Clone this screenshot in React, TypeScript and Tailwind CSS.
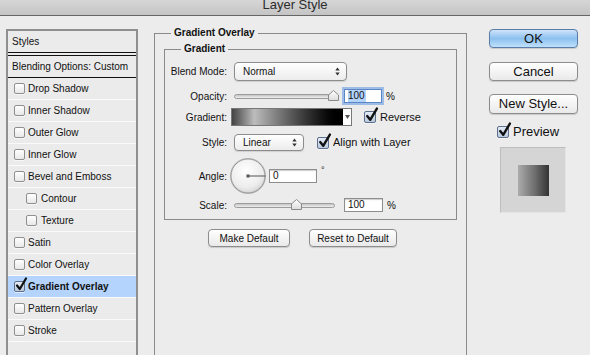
import React from 'react';

const styleRows = [
  { label: 'Drop Shadow' },
  { label: 'Inner Shadow' },
  { label: 'Outer Glow' },
  { label: 'Inner Glow' },
  { label: 'Bevel and Emboss' },
  { label: 'Contour', indent: true },
  { label: 'Texture', indent: true },
  { label: 'Satin' },
  { label: 'Color Overlay' },
  { label: 'Gradient Overlay', checked: true, active: true },
  { label: 'Pattern Overlay' },
  { label: 'Stroke' },
];

function Checkbox({ checked = false, big = false }: { checked?: boolean; big?: boolean }) {
  const box = big ? 'w-[12px] h-[12px]' : 'w-[11px] h-[11px]';
  return (
    <span className={`relative inline-block shrink-0 ${box}`}>
      <span
        className={`block w-full h-full rounded-[2px] border shadow-[0_1px_0_rgba(255,255,255,0.6)] ${
          checked
            ? 'border-[#5d6f8a] bg-linear-to-b from-[#e4ecf6] to-[#b9c9dd]'
            : 'border-[#8f8f8f] bg-linear-to-b from-white to-[#e8e8e8]'
        }`}
      />
      {checked && (
        <svg
          className="absolute left-[1px] -top-[3px] overflow-visible"
          width={big ? 13 : 12}
          height={big ? 14 : 13}
          viewBox="0 0 12 13"
        >
          <path d="M2 7.5 L4.8 11 L11 0.5" fill="none" stroke="#111" strokeWidth="2.2" strokeLinejoin="round" strokeLinecap="round" />
        </svg>
      )}
    </span>
  );
}

function UpDown() {
  return (
    <svg width="5" height="9" viewBox="0 0 5 9" className="shrink-0">
      <path d="M2.5 0.5 L4.7 3.5 L0.3 3.5 Z" fill="#333" />
      <path d="M2.5 8.5 L4.7 5.5 L0.3 5.5 Z" fill="#333" />
    </svg>
  );
}

function Select({ value, width }: { value: string; width: string }) {
  return (
    <div
      className={`${width} flex items-center justify-between pl-[8px] pr-[6px] rounded-[4px] border border-[#8c8c8c] bg-linear-to-b from-white to-[#ececec] shadow-[0_1px_1px_rgba(0,0,0,0.12)] text-[10px]`}
    >
      <span>{value}</span>
      <UpDown />
    </div>
  );
}

function Slider({ pos }: { pos: number }) {
  return (
    <div className="relative w-[101px] h-[12px] flex items-center">
      <div className="w-full h-[5px] rounded-full border border-[#9c9c9c] bg-linear-to-b from-[#c4c4c4] to-[#efefef]" />
      <svg
        className="absolute top-[0px]"
        style={{ left: pos - 5 }}
        width="11"
        height="11"
        viewBox="0 0 11 11"
      >
        <defs>
          <linearGradient id="thumb" x1="0" y1="0" x2="0" y2="1">
            <stop offset="0" stopColor="#ffffff" />
            <stop offset="1" stopColor="#dcdcdc" />
          </linearGradient>
        </defs>
        <path d="M5.5 0.5 L10.5 5 L10.5 10.5 L0.5 10.5 L0.5 5 Z" fill="url(#thumb)" stroke="#8a8a8a" />
      </svg>
    </div>
  );
}

function NumberBox({ value, w, focused = false }: { value: string; w: string; focused?: boolean }) {
  return (
    <div
      className={`${w} h-[14px] flex items-center pl-[3px] bg-white text-[10px] leading-[12px] border ${
        focused
          ? 'border-[#5a86c4] shadow-[0_0_0_2px_#9dbde8]'
          : 'border-[#8e8e8e] shadow-[inset_0_1px_1px_rgba(0,0,0,0.2)]'
      }`}
    >
      <span className={focused ? 'bg-[#b4d3fb] pr-[1px]' : ''}>{value}</span>
    </div>
  );
}

function Button({ label, w, h, primary = false, size = 'text-[13px]' }: { label: string; w: string; h: string; primary?: boolean; size?: string }) {
  return (
    <div
      className={`${w} ${h} ${size} flex items-center justify-center rounded-[4px] border shadow-[0_1px_1px_rgba(0,0,0,0.15)] ${
        primary
          ? 'border-[#5a7ca8] bg-linear-to-b from-[#cfe4fa] via-[#8cc0ef] to-[#bfe0fb]'
          : 'border-[#8c8c8c] bg-linear-to-b from-white to-[#e9e9e9]'
      }`}
    >
      {label}
    </div>
  );
}

function Dial() {
  return (
    <svg width="38" height="38" viewBox="0 0 38 38">
      <defs>
        <radialGradient id="dialFill" cx="0.45" cy="0.35" r="0.7">
          <stop offset="0" stopColor="#ffffff" />
          <stop offset="0.7" stopColor="#ececec" />
          <stop offset="1" stopColor="#cfcfcf" />
        </radialGradient>
      </defs>
      <circle cx="19" cy="19" r="18" fill="#bdbdbd" />
      <circle cx="19" cy="19" r="17" fill="url(#dialFill)" stroke="#8a8a8a" strokeWidth="0.8" />
      <line x1="19" y1="19" x2="36.5" y2="19" stroke="#555" strokeWidth="1" />
      <rect x="17.5" y="17.5" width="3" height="3" fill="#555" />
    </svg>
  );
}

export default function App() {
  return (
    <div className="w-[590px] h-[355px] overflow-hidden bg-[#ececec] text-[#111] font-['Liberation_Sans',Arial,sans-serif]">
      {/* title bar */}
      <div className="h-[16px] border-b border-[#666] bg-linear-to-b from-[#d6d6d6] to-[#c4c4c4] flex justify-center overflow-hidden">
        <span className="text-[13px] leading-[13px] -mt-[2px] text-[#2b2b2b]">Layer Style</span>
      </div>

      <div className="flex h-[339px] overflow-hidden">
        {/* styles list */}
        <div className="ml-[6px] mt-[13px] w-[132px] h-[340px] shrink-0 border-2 border-[#8f8f8f] bg-[#ebebeb] text-[10px]">
          <div className="h-[22px] flex items-center pl-[4px] border-b border-[#111]">Styles</div>
          <div className="h-[23px] mt-[2px] flex items-center pl-[4px] border-y border-[#111]">Blending Options: Custom</div>
          {styleRows.map((r) => (
            <div
              key={r.label}
              className={`h-[22px] flex items-center gap-[3px] border-b border-[#fafafa] ${
                r.indent ? 'pl-[18px]' : 'pl-[6px]'
              } ${r.active ? 'bg-[#b4d4fd] font-bold' : ''}`}
            >
              <Checkbox checked={r.checked} />
              <span className={r.indent ? 'ml-[1px]' : ''}>{r.label}</span>
            </div>
          ))}
        </div>

        {/* gradient overlay group */}
        <div className="relative ml-[16px] mt-[17px] w-[313px] h-[340px] shrink-0 border border-[#8a8a8a] text-[10px]">
          <span className="absolute left-[16px] -top-[7px] px-[3px] bg-[#ececec] font-bold leading-[12px]">Gradient Overlay</span>

          <div className="relative mx-[9px] mt-[15px] border border-[#8a8a8a] pt-[12px] pb-[7px]">
            <span className="absolute left-[16px] -top-[7px] px-[3px] bg-[#ececec] font-bold leading-[12px]">Gradient</span>

            <div className="flex items-center h-[19px]">
              <span className="w-[62px] text-right">Blend Mode:</span>
              <div className="ml-[7px] flex h-[19px]">
                <Select value="Normal" width="w-[113px]" />
              </div>
            </div>

            <div className="flex items-center h-[14px] mt-[8px]">
              <span className="w-[62px] text-right">Opacity:</span>
              <div className="ml-[7px]">
                <Slider pos={99} />
              </div>
              <div className="ml-[9px]">
                <NumberBox value="100" w="w-[38px]" focused />
              </div>
              <span className="ml-[4px]">%</span>
            </div>

            <div className="flex items-center h-[18px] mt-[5px]">
              <span className="w-[62px] text-right">Gradient:</span>
              <div className="ml-[4px] flex h-[18px] border border-[#777] bg-white">
                <div className="w-[111px] h-full shrink-0 bg-linear-to-r from-[#444] via-[#bdbdbd] via-20% to-black" />
                <div className="w-[8px] h-full shrink-0 bg-white flex items-center justify-center">
                  <svg width="5" height="4" viewBox="0 0 5 4">
                    <path d="M0 0 L5 0 L2.5 4 Z" fill="#555" />
                  </svg>
                </div>
              </div>
              <div className="ml-[12px] flex items-center gap-[4px] text-[11px]">
                <Checkbox checked big />
                <span>Reverse</span>
              </div>
            </div>

            <div className="flex items-center h-[17px] mt-[8px]">
              <span className="w-[62px] text-right">Style:</span>
              <div className="ml-[7px] flex h-[17px]">
                <Select value="Linear" width="w-[70px]" />
              </div>
              <div className="ml-[13px] flex items-center gap-[4px] text-[11px]">
                <Checkbox checked big />
                <span>Align with Layer</span>
              </div>
            </div>

            <div className="flex items-center h-[38px] mt-[6px]">
              <span className="w-[62px] text-right">Angle:</span>
              <div className="ml-[2px]">
                <Dial />
              </div>
              <div className="ml-[2px]">
                <NumberBox value="0" w="w-[48px]" />
              </div>
              <span className="ml-[4px] self-start mt-[9px] text-[9px] leading-[9px]">°</span>
            </div>

            <div className="flex items-center h-[14px] mt-[3px]">
              <span className="w-[62px] text-right">Scale:</span>
              <div className="ml-[7px]">
                <Slider pos={62} />
              </div>
              <div className="ml-[9px]">
                <NumberBox value="100" w="w-[39px]" />
              </div>
              <span className="ml-[4px]">%</span>
            </div>
          </div>

          <div className="flex mt-[9px] pl-[53px]">
            <Button label="Make Default" w="w-[82px]" h="h-[18px]" size="text-[10px]" />
            <div className="ml-[19px]">
              <Button label="Reset to Default" w="w-[88px]" h="h-[18px]" size="text-[10px]" />
            </div>
          </div>
        </div>

        {/* buttons column */}
        <div className="ml-[22px] mt-[13px] w-[89px] shrink-0 flex flex-col">
          <Button label="OK" w="w-[89px]" h="h-[19px]" primary />
          <div className="mt-[14px]">
            <Button label="Cancel" w="w-[89px]" h="h-[19px]" />
          </div>
          <div className="mt-[13px]">
            <Button label="New Style..." w="w-[89px]" h="h-[20px]" />
          </div>
          <div className="mt-[11px] ml-[8px] flex items-center gap-[4px] text-[13px] h-[14px]">
            <Checkbox checked big />
            <span>Preview</span>
          </div>
          <div className="mt-[8px] ml-[11px] w-[66px] h-[66px] bg-[#d5d5d5] border border-t-[#bdbdbd] border-l-[#bdbdbd] border-r-[#e4e4e4] border-b-[#e4e4e4] flex items-center justify-center">
            <div className="w-[31px] h-[31px] bg-linear-to-r from-[#acacac] via-[#6e6e6e] via-55% to-[#343434]" />
          </div>
        </div>
      </div>
    </div>
  );
}
